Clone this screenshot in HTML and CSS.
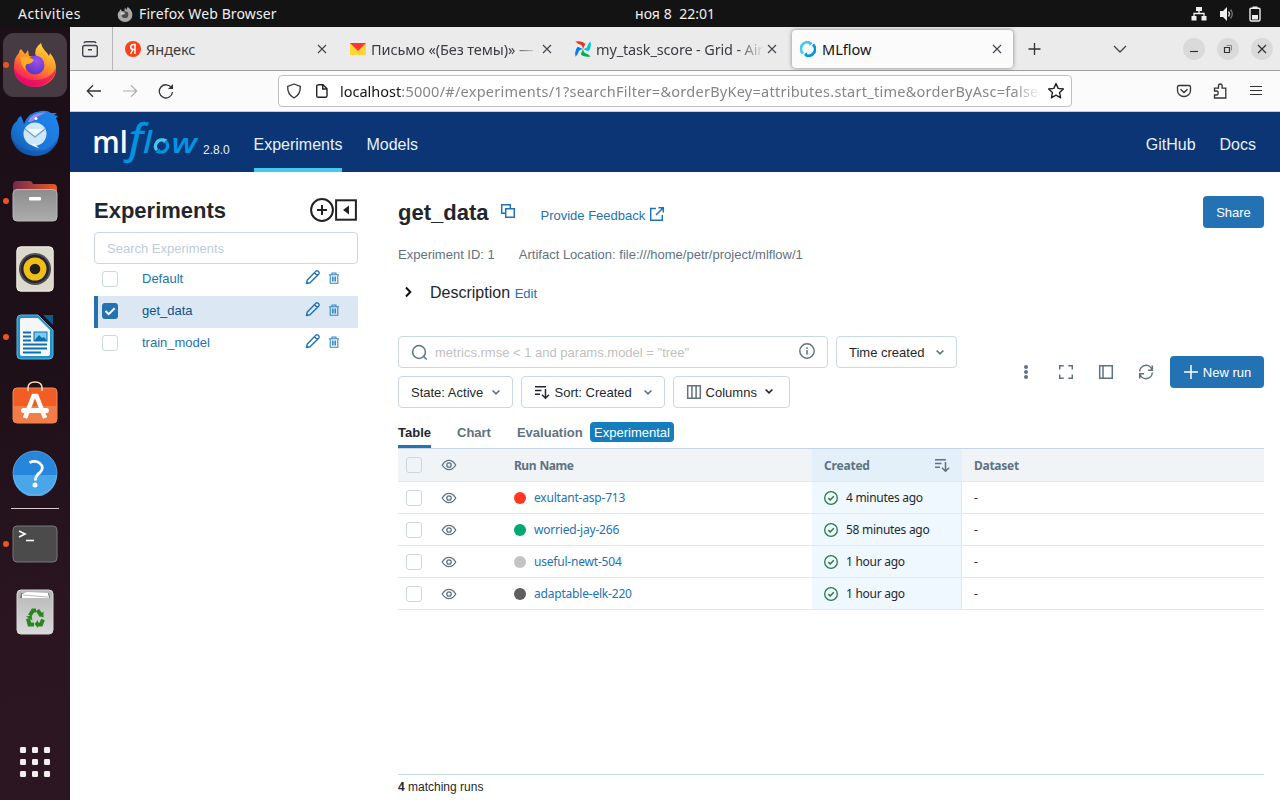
FILE: index.html
```html
<!DOCTYPE html>
<html lang="en">
<head>
<meta charset="utf-8">
<title>MLflow</title>
<link rel="stylesheet" href="styles.css">
</head>
<body>
<svg class="defs" width="0" height="0">
  <defs>
    <linearGradient id="ffBody" x1="0.8" y1="0" x2="0.3" y2="1"><stop offset="0" stop-color="#ffe23c"/><stop offset=".45" stop-color="#ff9326"/><stop offset=".75" stop-color="#ff4046"/><stop offset="1" stop-color="#e5086d"/></linearGradient>
    <radialGradient id="ffGlobe" cx=".6" cy=".3" r=".8"><stop offset="0" stop-color="#9c50f5"/><stop offset="1" stop-color="#5234b8"/></radialGradient>
    <linearGradient id="tb" x1="1" y1="0" x2="0" y2="1"><stop offset="0" stop-color="#2186ee"/><stop offset=".6" stop-color="#1a76d8"/><stop offset="1" stop-color="#1253a6"/></linearGradient>
    <linearGradient id="folder" x1="0" x2="1"><stop offset="0" stop-color="#76294f"/><stop offset="1" stop-color="#ea5b24"/></linearGradient>
    <linearGradient id="grey" x1="0" y1="0" x2="0" y2="1"><stop offset="0" stop-color="#8d8d8d"/><stop offset="1" stop-color="#acacac"/></linearGradient>
    <linearGradient id="bin" x1="0" y1="0" x2="0" y2="1"><stop offset="0" stop-color="#b7b7b7"/><stop offset="1" stop-color="#dadada"/></linearGradient>
    <linearGradient id="ring" x1="0" y1="0" x2="1" y2="1"><stop offset=".45" stop-color="#43c9ed"/><stop offset=".55" stop-color="#0194e2"/></linearGradient>
    <symbol id="close" viewBox="0 0 16 16"><path d="M4 4l8 8M12 4l-8 8" fill="none" stroke="#42414d" stroke-width="1.1"/></symbol>
    <symbol id="pencil" viewBox="0 0 16 16"><path d="M1.500 14.500l.8-3.500 8.800-8.900q.9-.8 1.800 0l1 1q.8.900 0 1.800l-8.900 8.800zM9.500 3.700l2.800 2.800" fill="none" stroke="#2272b4" stroke-width="1.400" stroke-linejoin="round"/></symbol>
    <symbol id="trash" viewBox="0 0 12 12"><path d="M1 2.700h10M4 2.500V1h4v1.500M2.200 2.700v8.500h7.600V2.700M4.500 4.500v5M6 4.500v5M7.500 4.500v5" fill="none" stroke="#3388c6" stroke-width="1.100"/></symbol>
    <symbol id="chev" viewBox="0 0 10 10"><path d="M1.600 3.500L5 6.800l3.400-3.300" fill="none" stroke="currentColor" stroke-width="1.700"/></symbol>
    <symbol id="sort" viewBox="0 0 16 16"><path d="M1 2.700h11M1 6.400h6.500M1 10.200h5M11.500 5v9.300M8 10.800l3.500 3.500 3.500-3.500" fill="none" stroke="currentColor" stroke-width="1.500"/></symbol>
    <symbol id="eye" viewBox="0 0 16 14"><path d="M1.300 7Q4 2.300 8 2.300T14.700 7Q12 11.700 8 11.700T1.300 7z" fill="none" stroke="#5f7281" stroke-width="1.300"/><circle cx="8" cy="7" r="2.200" fill="none" stroke="#5f7281" stroke-width="1.300"/></symbol>
    <symbol id="ok" viewBox="0 0 14 14"><circle cx="7" cy="7" r="6.300" fill="none" stroke="#277c43" stroke-width="1.300"/><path d="M4.300 7.100l1.900 1.900 3.600-3.700" fill="none" stroke="#277c43" stroke-width="1.500"/></symbol>
    <path id="blade" d="M.3.600Q7-1 10.300 2.800L8 8Q7.500 3.500 3.500 3z"/>
  </defs>
</svg>

<div class="desktop">
  <header class="topbar">
    <span class="activities">Activities</span>
    <span class="app"><svg width="16" height="16" viewBox="0 0 48 48"><path d="M24 4l4 8 4-10q16 13 14 26a22 20 0 01-44 0q0-9 6-14l3-5 4 7 7-1z" fill="#a8a8a8"/><circle cx="24" cy="26" r="10" fill="#4c4c4c"/><path d="M10 17l15 3-3 5-10 2z" fill="#ccc"/></svg><span class="app-name">Firefox Web Browser</span></span>
    <span class="clock">ноя 8&nbsp; 22:01</span>
    <span class="tray">
      <svg width="16" height="16" viewBox="0 0 16 16"><path d="M5 1h6v4H5zM.500 10h5v4.500h-5zM10.500 10h5v4.500h-5z" fill="#eee"/><path d="M8 4v3.500M3 11V7.500h10V11" fill="none" stroke="#eee" stroke-width="1.300"/></svg>
      <svg width="16" height="16" viewBox="0 0 16 16"><path d="M1 5h3l4-4v14l-4-4H1z" fill="#eee"/><path d="M9.500 5.500q2 2.500 0 5" fill="none" stroke="#ddd" stroke-width="1.300"/><path d="M11.500 3.500q3.600 4.500 0 9" fill="none" stroke="#777" stroke-width="1.300"/></svg>
      <svg width="16" height="16" viewBox="0 0 16 16"><path d="M4 2.200h8q1 0 1 1v10.300q0 1.500-1.500 1.500h-7Q3 15 3 13.500V3.200q0-1 1-1z" fill="none" stroke="#eee" stroke-width="1.400"/><path d="M5.500.500h5v1.500h-5zM5 9h6v4.500H5z" fill="#eee"/></svg>
    </span>
  </header>

  <div class="below">
    <nav class="dock">
      <div class="dock-item active running"><svg width="44" height="46" viewBox="0 0 44 46"><path d="M1 25Q1 15 6 11q0-3 2-4l4 5q2-2 3-4l1 6h7Q20 7 28 1q1 5 6 10l2 3 1-3q6 7 6 16a21 18 0 01-42 0z" fill="url(#ffBody)"/><path d="M1 26a21 18 0 0042 0q-6 12-21 12T1 26z" fill="#e3056b" opacity=".65"/><circle cx="22" cy="23" r="9.500" fill="url(#ffGlobe)"/><path d="M7 15q8-2 14 3-2 4-7 4-3 2-1 7-5-5-6-14z" fill="#ffab25"/></svg></div>
      <div class="dock-item mail"><svg width="48" height="48" viewBox="0 0 48 48"><path d="M0 24Q0 15 6 11q1-4 4-5 2 4 3 8Q17 2 30 1q6-1 10 2l6 0-3 2 4 1-2 2q4 8 3 16a24 23 0 01-46 8Q0 29 0 24z" fill="url(#tb)"/><path d="M17 12Q20 2 35 2.500L26 7q-3 5-9 5z" fill="#9d8bed"/><circle cx="24" cy="24" r="11.500" fill="#cfe7fb"/><path d="M14 19l10 8 10-8" fill="#edf8ff" stroke="#6f9bc9" stroke-width="1.200"/><path d="M19 34q4 3 9 4l-4-4z" fill="#edf8ff"/><circle cx="25" cy="8.500" r="1.500" fill="#fff"/><path d="M1 29q3 16 23 17 19 0 23-18-7 13-22 13T1 29z" fill="#0d4d9b" opacity=".5"/></svg></div>
      <div class="dock-item running"><svg width="46" height="42" viewBox="0 0 46 42"><path d="M1 30V5q0-4 4-4h13q2 0 3 3h20q4 0 4 4v22z" fill="url(#folder)"/><rect x="1" y="9.500" width="44" height="31.500" rx="4" fill="url(#grey)" stroke="#b8b8b8"/><rect x="17" y="17" width="12" height="3.500" rx="1" fill="#fff"/></svg></div>
      <div class="dock-item"><svg width="38" height="46" viewBox="0 0 38 46"><rect x=".8" y=".8" width="36.400" height="44.400" rx="4" fill="#ded9ce" stroke="#f3efe6"/><circle cx="19" cy="23" r="16" fill="#4d4d4f"/><circle cx="19" cy="23" r="14" fill="#252535"/><circle cx="19" cy="23" r="11.500" fill="#efbf17"/><circle cx="19" cy="23" r="5.300" fill="#202020"/></svg></div>
      <div class="dock-item running"><svg width="38" height="46" viewBox="0 0 38 46"><path d="M5 1h17l15 15v25q0 4-4 4H5q-4 0-4-4V5q0-4 4-4z" fill="#2192cc" stroke="#69b4db"/><path d="M5 4h17l12 12v24q0 2-2 2H6q-2 0-2-2V6q0-2 1-2z" fill="#f4f6f7"/><path d="M27 1h10v10z" fill="#0b5c8e"/><path d="M7 18.500h8M7 22.500h8M7 26.500h8M7 30.500h24M7 34.500h24M7 38.500h18" stroke="#0e70ac" stroke-width="2"/><rect x="18" y="18" width="13" height="9" fill="#79cdf5" stroke="#0e70ac"/><path d="M18 27l5-6 3 3 2-1 3 4z" fill="#0e70ac"/></svg></div>
      <div class="dock-item store"><svg width="46" height="46" viewBox="0 0 46 46"><rect x="1" y="9" width="44" height="35" rx="4" fill="#f15d25" stroke="#ef8b5c"/><path d="M1 27h44v13q0 4-4 4H5q-4 0-4-4z" fill="#f27d48"/><path d="M16 12V9q0-6 7-6t7 6v3" fill="none" stroke="#f7dfb5" stroke-width="1.500"/><path d="M13 39l8.500-22h3L33 39" fill="none" stroke="#fff" stroke-width="4.500"/><rect x="9" y="29" width="28" height="5" rx="2.500" fill="#fff"/></svg></div>
      <div class="dock-item"><svg width="46" height="46" viewBox="0 0 46 46"><circle cx="23" cy="23" r="22" fill="#2586db"/><path d="M1 25a22 22 0 0044 0z" fill="#49a6e8"/><circle cx="23" cy="23" r="22" fill="none" stroke="#75bcea" stroke-width=".7"/><path d="M17.500 12.500q6-2.500 10 .500 5.500 4.500.5 9.500-4.500 3-4.500 8" fill="none" stroke="#fff" stroke-width="2.800"/><circle cx="23" cy="35" r="2.500" fill="#fff"/></svg></div>
      <div class="dock-sep"></div>
      <div class="dock-item running"><svg width="46" height="38" viewBox="0 0 46 38"><rect x="1" y="1" width="44" height="36" rx="4" fill="#4b4b4b" stroke="#777"/><path d="M7 6l6 3-6 3M14 15.500h8" fill="none" stroke="#fff" stroke-width="1.700"/></svg></div>
      <div class="dock-item"><svg width="38" height="46" viewBox="0 0 38 46"><rect x="1" y="1" width="36" height="44" rx="4" fill="url(#bin)" stroke="#d7d7d7"/><path d="M4 9l1-5h28l1 5z" fill="#777"/><path d="M6 9V5l5-2 21 1 1 5z" fill="#fff"/><path d="M7 6l25 2" stroke="#bbb"/><g fill="none" stroke="#26871c" stroke-width="4"><path d="M13.800 26.500l3.200-5h3M21.500 21l4 6M12 29.500l1.500 6h4.500M21 35.500h4l2-5"/></g><path d="M27.500 22.500v6l-5-2z M22 31v8l-3.500-4z M10 27.500l5.500-1 1 5z" fill="#26871c"/></svg></div>
      <svg class="app-grid" width="30" height="30" viewBox="0 0 30 30" fill="#f1f0ef"><rect width="6" height="6" rx="1.300"/><rect x="12" width="6" height="6" rx="1.300"/><rect x="24" width="6" height="6" rx="1.300"/><rect y="12" width="6" height="6" rx="1.300"/><rect x="12" y="12" width="6" height="6" rx="1.300"/><rect x="24" y="12" width="6" height="6" rx="1.300"/><rect y="24" width="6" height="6" rx="1.300"/><rect x="12" y="24" width="6" height="6" rx="1.300"/><rect x="24" y="24" width="6" height="6" rx="1.300"/></svg>
    </nav>

    <div class="browser">
      <div class="tabbar">
        <div class="view"><svg width="18" height="18" viewBox="0 0 18 18" fill="none" stroke="#42414d" stroke-width="1.400"><rect x="1.700" y="5.500" width="14.600" height="11" rx="2"/><path d="M3 3.200q.3-1.500 2-1.500h8q1.700 0 2 1.500M7 9.700h4"/></svg></div>
        <div class="tab"><svg width="16" height="16" viewBox="0 0 16 16"><circle cx="8" cy="8" r="8" fill="#fc3f1d"/><path d="M10 13V3.500H8.500Q5.700 3.500 5.700 6t2.800 2.500H10M8 8.500L5.500 13" fill="none" stroke="#fff" stroke-width="1.500"/></svg><span class="tab-label t1">Яндекс</span><svg class="x" width="16" height="16"><use href="#close"/></svg></div>
        <div class="tab"><svg width="16" height="16" viewBox="0 0 16 16"><path d="M0 2h16v12H0z" fill="#ffd633"/><path d="M0 2h16L8 10z" fill="#f33"/></svg><span class="tab-label t2 fade">Письмо «(Без темы)» —</span><svg class="x" width="16" height="16"><use href="#close"/></svg></div>
        <div class="tab"><svg width="16" height="16" viewBox="0 0 16 16"><use href="#blade" fill="#e43921"/><use href="#blade" fill="#00c7d4" transform="rotate(90 8 8)"/><use href="#blade" fill="#04b04c" transform="rotate(180 8 8)"/><use href="#blade" fill="#017cee" transform="rotate(270 8 8)"/></svg><span class="tab-label t3 fade">my_task_score - Grid - Air</span><svg class="x" width="16" height="16"><use href="#close"/></svg></div>
        <div class="tab selected"><svg width="16" height="16" viewBox="0 0 16 16"><path d="M3 12.500A6.500 6.500 0 0110 1.800" fill="none" stroke="#43c9ed" stroke-width="2.800"/><path d="M13 3.500A6.500 6.500 0 016 14.200" fill="none" stroke="#0194e2" stroke-width="2.800"/><path d="M8.500 0l4 2-3 3zM7.500 16l-4-2 3-3z" fill="url(#ring)"/></svg><span class="tab-label t4">MLflow</span><svg class="x" width="16" height="16"><use href="#close"/></svg></div>
        <svg class="plus" width="16" height="16" viewBox="0 0 16 16"><path d="M8.500 2v12M2.500 8h12" stroke="#333" stroke-width="1.300"/></svg>
        <svg class="alltabs" width="16" height="16" viewBox="0 0 16 16"><path d="M2 5l6 6 6-6" fill="none" stroke="#444" stroke-width="1.300"/></svg>
        <div class="winbtns">
          <span><svg width="10" height="10" viewBox="0 0 10 10"><path d="M1 7.500h8" stroke="#333" stroke-width="1.200"/></svg></span>
          <span><svg width="10" height="10" viewBox="0 0 10 10" fill="none" stroke="#333"><path d="M1.500 3.500h5v5h-5z" stroke-width="1.200"/><path d="M3.500 1.500h5v5" stroke="#888"/></svg></span>
          <span><svg width="10" height="10" viewBox="0 0 10 10"><path d="M1 1l8 8M9 1L1 9" stroke="#333" stroke-width="1.300"/></svg></span>
        </div>
      </div>

      <div class="toolbar">
        <div class="nav-btns">
          <svg width="16" height="16" viewBox="0 0 16 16" fill="none" stroke="#333" stroke-width="1.300"><path d="M15 8H1.500M7 2.300L1.300 8 7 13.700"/></svg>
          <svg width="16" height="16" viewBox="0 0 16 16" fill="none" stroke="#aaa" stroke-width="1.200"><path d="M1 8h13.500M9 2.300L14.700 8 9 13.700"/></svg>
          <svg width="16" height="16" viewBox="0 0 16 16"><path d="M13.600 5A6.600 6.600 0 1014.500 9" fill="none" stroke="#333" stroke-width="1.300"/><path d="M15 1v5H10z" fill="#333"/></svg>
        </div>
        <div class="urlbar">
          <svg width="16" height="16" viewBox="0 0 16 16"><path d="M8 1l6.300 2.300q.500 8-6.300 11.700Q1.200 11.300 1.700 3.300z" fill="none" stroke="#333" stroke-width="1.300" stroke-linejoin="round"/></svg>
          <svg class="page-ic" width="16" height="16" viewBox="0 0 16 16"><path d="M4 1.700h5l4 4v7q0 1.600-1.600 1.600H4.300q-1.600 0-1.600-1.600V3.300q0-1.600 1.600-1.600zM8.700 1.700V6H13" fill="none" stroke="#222" stroke-width="1.400"/></svg>
          <span class="url"><b>localhost</b>:5000/#/experiments/1?searchFilter=&amp;orderByKey=attributes.start_time&amp;orderByAsc=false</span>
          <svg width="18" height="18" viewBox="0 0 18 18"><path d="M9 1.600l2.200 4.800 5.200.600-3.800 3.600 1 5.200L9 13.200l-4.600 2.600 1-5.200L1.600 7l5.200-.600z" fill="none" stroke="#222" stroke-width="1.400" stroke-linejoin="round"/></svg>
        </div>
        <div class="tools">
          <svg width="16" height="16" viewBox="0 0 16 16" fill="none" stroke="#333" stroke-width="1.300"><path d="M3 2.500h10q1.500 0 1.500 1.500v3.500a6.500 6 0 01-13 0V4Q1.500 2.500 3 2.500zM4.500 6.200L8 9.500l3.500-3.300"/></svg>
          <svg width="16" height="16" viewBox="0 0 16 16" fill="none" stroke="#333" stroke-width="1.300"><path d="M2.500 8V5.200h4V3q0-2 1.800-2t1.800 2v2.200h3.700V15H2.500v-3h2q1.700 0 1.700-2t-1.700-2z"/></svg>
          <svg width="16" height="16" viewBox="0 0 16 16" stroke="#333" stroke-width="1.200"><path d="M2 3.500h12M2 7.500h12M2 11.500h12"/></svg>
        </div>
      </div>

      <div class="mlheader">
        <svg class="logo" width="106" height="44" viewBox="0 0 106 44">
          <text x="-1.800" y="31" class="lg-ml" textLength="35.500" lengthAdjust="spacingAndGlyphs">ml</text>
          <text x="35" y="31" class="lg-f" textLength="14" lengthAdjust="spacingAndGlyphs">f</text>
          <text x="49" y="31" class="lg-fl" textLength="9" lengthAdjust="spacingAndGlyphs">l</text>
          <g fill="none" stroke-width="3.200"><path d="M63 28.300a6.200 6.200 0 016.500-10" stroke="#43c9ed"/><path d="M72 19.700a6.200 6.200 0 01-6.500 10" stroke="#0194e2"/></g>
          <path d="M68.500 16l5 1.500-4 4z" fill="#43c9ed"/><path d="M66.500 32l-5-1.500 4-4z" fill="#0194e2"/>
          <text x="77.500" y="31" class="lg-w" textLength="25.500" lengthAdjust="spacingAndGlyphs">w</text>
        </svg>
        <span class="version">2.8.0</span>
        <a class="navlink on">Experiments</a>
        <a class="navlink">Models</a>
        <span class="grow"></span>
        <a class="navlink">GitHub</a>
        <a class="navlink">Docs</a>
      </div>

      <div class="page">
        <aside class="side">
          <div class="side-head"><h1>Experiments</h1>
            <svg width="48" height="24" viewBox="0 0 48 24" fill="none" stroke="#222"><circle cx="12" cy="12" r="10.900" stroke-width="2"/><path d="M12 7v10M7 12h10" stroke-width="2"/><rect x="26.100" y="2.300" width="19.800" height="19.400" stroke-width="2"/><path d="M39 7.500v9L33 12z" fill="#222" stroke="none"/></svg>
          </div>
          <div class="side-search">Search Experiments</div>
          <div class="exp"><i class="cb"></i><span>Default</span><svg width="16" height="16"><use href="#pencil"/></svg><svg width="12" height="12"><use href="#trash"/></svg></div>
          <div class="exp sel"><i class="cb checked"><svg width="16" height="16" viewBox="0 0 16 16"><path d="M3.500 8l3.200 3.200 6-6" fill="none" stroke="#fff" stroke-width="2"/></svg></i><span>get_data</span><svg width="16" height="16"><use href="#pencil"/></svg><svg width="12" height="12"><use href="#trash"/></svg></div>
          <div class="exp"><i class="cb"></i><span>train_model</span><svg width="16" height="16"><use href="#pencil"/></svg><svg width="12" height="12"><use href="#trash"/></svg></div>
        </aside>

        <main class="main">
          <div class="title-row"><h2>get_data</h2>
            <svg class="copy" width="16" height="16" viewBox="0 0 16 16" fill="none" stroke="#2272b4" stroke-width="1.500"><path d="M5 10.300H1.700V1.700h8.600V5M5.700 5.700h8.600v8.600H5.700z"/></svg>
            <a class="feedback">Provide Feedback</a>
            <svg class="ext" width="16" height="16" viewBox="0 0 16 16" fill="none" stroke="#2272b4" stroke-width="1.500"><path d="M7 2.500H1.700v11.800h11.600V9M9.500 1.700h4.800v4.800M14.300 1.700L7 9"/></svg>
            <span class="grow"></span><button class="primary share">Share</button>
          </div>
          <div class="meta"><span>Experiment ID: 1</span><span>Artifact Location: file:///home/petr/project/mlflow/1</span></div>
          <div class="desc"><svg width="12" height="12" viewBox="0 0 12 12"><path d="M4 1.500L8.300 6 4 10.500" fill="none" stroke="#111" stroke-width="2"/></svg><span>Description</span><a>Edit</a></div>

          <div class="controls">
            <div class="filters">
              <div class="frow">
                <div class="search"><svg width="17" height="17" viewBox="0 0 17 17" fill="none" stroke="#5f7281" stroke-width="1.500"><circle cx="8" cy="8" r="6.400"/><path d="M12.300 12.300l3.400 3.200"/></svg><span>metrics.rmse &lt; 1 and params.model = "tree"</span><svg class="info" width="16" height="16" viewBox="0 0 16 16"><circle cx="8" cy="8" r="7.200" fill="none" stroke="#5f7281" stroke-width="1.400"/><path d="M8 7v4.500M8 4.300v1.700" stroke="#5f7281" stroke-width="1.500"/></svg></div>
                <button class="btn time">Time created<svg width="10" height="10"><use href="#chev"/></svg></button>
              </div>
              <div class="frow">
                <button class="btn state">State: Active<svg width="10" height="10"><use href="#chev"/></svg></button>
                <button class="btn sortb"><svg class="lead" width="16" height="16"><use href="#sort"/></svg>Sort: Created<svg width="10" height="10"><use href="#chev"/></svg></button>
                <button class="btn cols"><svg class="lead g" width="16" height="16" viewBox="0 0 16 16"><path d="M1.700 1.700h12.600v12.600H1.700zM5.900 1.700v12.600M10.100 1.700v12.600" fill="none" stroke="currentColor" stroke-width="1.500"/></svg>Columns<svg class="dark" width="10" height="10"><use href="#chev"/></svg></button>
              </div>
            </div>
            <div class="actions">
              <svg width="16" height="16" viewBox="0 0 16 16" fill="#5f7281"><circle cx="8" cy="3" r="2"/><circle cx="8" cy="8" r="2"/><circle cx="8" cy="13" r="2"/></svg>
              <svg width="16" height="16" viewBox="0 0 16 16" fill="none" stroke="#5f7281" stroke-width="1.500"><path d="M1.700 5.500V1.700h4M10.300 1.700h4v3.800M14.300 10.500v3.800h-4M5.700 14.300h-4v-3.800"/></svg>
              <svg width="16" height="16" viewBox="0 0 16 16" fill="none" stroke="#5f7281" stroke-width="1.500"><path d="M1.700 1.700h12.600v12.600H1.700zM5 1.700v12.600"/></svg>
              <svg width="16" height="16" viewBox="0 0 16 16" fill="none" stroke="#5f7281" stroke-width="1.500"><path d="M1.700 7.500A6.300 6.300 0 0114 5.700M14.300 1.500v4.700H10M14.300 8.500A6.300 6.300 0 012 10.300M1.700 14.500V9.800H6"/></svg>
              <button class="primary newrun"><svg width="16" height="16" viewBox="0 0 16 16"><path d="M8 1v14M1 8h14" stroke="#fff" stroke-width="1.500"/></svg>New run</button>
            </div>
          </div>

          <div class="tabs"><span class="cur">Table</span><span>Chart</span><span>Evaluation</span><em>Experimental</em></div>

          <div class="grid">
            <div class="row head"><i class="cb"></i><svg width="16" height="14"><use href="#eye"/></svg><span class="name">Run Name</span><span class="created">Created<svg class="sorticon" width="16" height="16"><use href="#sort"/></svg></span><span class="ds">Dataset</span></div>
            <div class="row"><i class="cb"></i><svg width="16" height="14"><use href="#eye"/></svg><span class="name"><i class="dot red"></i><a>exultant-asp-713</a></span><span class="created"><svg width="14" height="14"><use href="#ok"/></svg>4 minutes ago</span><span class="ds">-</span></div>
            <div class="row"><i class="cb"></i><svg width="16" height="14"><use href="#eye"/></svg><span class="name"><i class="dot green"></i><a>worried-jay-266</a></span><span class="created"><svg width="14" height="14"><use href="#ok"/></svg>58 minutes ago</span><span class="ds">-</span></div>
            <div class="row"><i class="cb"></i><svg width="16" height="14"><use href="#eye"/></svg><span class="name"><i class="dot light"></i><a>useful-newt-504</a></span><span class="created"><svg width="14" height="14"><use href="#ok"/></svg>1 hour ago</span><span class="ds">-</span></div>
            <div class="row"><i class="cb"></i><svg width="16" height="14"><use href="#eye"/></svg><span class="name"><i class="dot deep"></i><a>adaptable-elk-220</a></span><span class="created"><svg width="14" height="14"><use href="#ok"/></svg>1 hour ago</span><span class="ds">-</span></div>
          </div>
          <div class="foot"><b>4</b> matching runs</div>
        </main>
      </div>
    </div>
  </div>
</div>
</body>
</html>
```
FILE: styles.css
```css
* { box-sizing: border-box; }
body { margin: 0; font-family: "Liberation Sans", Arial, sans-serif; font-size: 13px; color: #1f272d; overflow: hidden; }
svg { display: block; flex: none; }
button { font: inherit; margin: 0; }
.defs { position: absolute; }
.grow { flex: 1; }
.desktop { width: 1280px; height: 800px; display: flex; flex-direction: column; background: #fff; }

.topbar { height: 27px; background: #131313; color: #f0f0f0; display: flex; align-items: center; font: 14px/27px "Noto Sans", sans-serif; }
.activities { width: 117px; padding-left: 18px; letter-spacing: .45px; }
.app { display: flex; align-items: center; gap: 6px; width: 518px; }
.app-name { letter-spacing: .12px; }
.clock { white-space: nowrap; flex: 1; letter-spacing: .05px; }
.tray { display: flex; gap: 12px; padding-right: 17px; }

.below { flex: 1; display: flex; min-height: 0; }
.dock { width: 70px; background: linear-gradient(165deg, #1c0f17 0%, #1e1018 45%, #2a1520 75%, #2c1622 100%); display: flex; flex-direction: column; align-items: center; padding: 4px 0 23px; }
.dock-item { width: 64px; height: 64px; margin: 2px 0; border-radius: 11px; display: flex; align-items: center; justify-content: center; position: relative; flex: none; }
.dock-item.active { background: #463b42; }
.dock-item.running::before { content: ""; position: absolute; left: 0; top: 29px; width: 6px; height: 6px; border-radius: 50%; background: #e95420; }
.dock-item.mail { padding-top: 2px; }
.dock-item.store { padding-bottom: 6px; }
.dock-sep { width: 48px; height: 1px; margin: 1px 0; background: #d2cbc9; flex: none; }
.app-grid { margin-top: auto; }

.browser { flex: 1; display: flex; flex-direction: column; min-width: 0; }
.tabbar { height: 44px; background: #ebebeb; border-bottom: 1px solid #9e9e9e; display: flex; align-items: center; font: 14.500px "Noto Sans", sans-serif; color: #3c3c43; }
.view { width: 43px; height: 43px; border-right: 1px solid #b5b5b5; display: flex; align-items: center; padding-left: 11px; }
.tab { width: 225px; height: 38px; padding: 0 8px 0 12px; display: flex; align-items: center; gap: 6px; }
.tab-label { flex: 1; white-space: nowrap; overflow: hidden; line-height: 24px; margin-left: -1px; }
.t2 { letter-spacing: -.1px; }
.t3 { letter-spacing: -.15px; }
.t4 { margin-left: 0; }
.tab .x { margin-left: -6px; }
.fade { -webkit-mask-image: linear-gradient(90deg, #000 84%, transparent 100%); mask-image: linear-gradient(90deg, #000 84%, transparent 100%); }
.selected { width: 221px; padding: 0 8px; margin-left: 4px; background: #fbfbfb; border-radius: 4px; box-shadow: 0 0 4px rgba(0,0,0,.45); color: #15141a; }
.plus { margin-left: 13px; }
.alltabs { margin-left: 70px; }
.winbtns { display: flex; gap: 12px; margin-left: 55px; }
.winbtns span { width: 22px; height: 22px; border-radius: 50%; background: #dadada; display: flex; align-items: center; justify-content: center; }

.toolbar { height: 41px; background: #fbfbfb; border-bottom: 1px solid #ccc; display: flex; align-items: center; }
.nav-btns { display: flex; gap: 20px; padding-left: 16px; width: 208px; }
.urlbar { width: 794px; height: 32px; border: 1px solid #bfbfc5; border-radius: 4px; background: #fff; display: flex; align-items: center; padding: 0 6px 0 7px; }
.page-ic { margin: 0 10px 0 12px; }
.url { flex: 1; white-space: nowrap; overflow: hidden; margin-right: 6px; font: 14.500px/24px "Noto Sans", sans-serif; letter-spacing: .26px; color: #858585; -webkit-mask-image: linear-gradient(90deg, #000 96%, transparent); mask-image: linear-gradient(90deg, #000 96%, transparent); }
.url b { font-weight: 400; color: #15141a; letter-spacing: 0; }
.tools { display: flex; gap: 20px; margin-left: 104px; }

.mlheader { height: 60px; background: #0b3574; display: flex; align-items: stretch; padding: 0 24px; color: #e7f1fb; flex: none; }
.logo { margin-top: 10px; overflow: visible; }
.lg-ml { font: 600 31px "Open Sans", sans-serif; fill: #fff; }
.lg-f, .lg-fl, .lg-w { font: italic 600 31px "Open Sans", sans-serif; fill: #0194e2; }
.lg-f { font: italic 400 40px "Noto Sans", sans-serif; stroke: #0194e2; stroke-width: .5px; }
.lg-w { font-size: 27px; }
.version { font-size: 12px; width: 27px; margin: 31px 23.500px 0 3px; }
.navlink { font-size: 16px; line-height: 58px; padding-top: 4px; }
.navlink + .navlink { margin-left: 24px; }
.navlink.on { border-bottom: 4px solid #43c9ed; }

.page { flex: 1; display: flex; min-height: 0; }
.side { width: 288px; padding: 24px 0 0 24px; }
.side-head { display: flex; height: 36px; justify-content: space-between; }
h1, h2 { margin: 0; font-size: 22px; line-height: 30px; }
.side-head svg { margin-top: 2px; }
.side-search { height: 32px; border: 1px solid #c9d6e4; border-radius: 4px; padding-left: 12px; line-height: 31px; color: #bdcddb; }
.exp { height: 32px; display: flex; align-items: center; padding-left: 8px; color: #2272b4; }
.exp span { width: 163px; margin-left: 24px; padding-bottom: 4px; }
.exp > svg:nth-of-type(1) { margin-bottom: 6px; }
.exp > svg:last-child { margin: 0 0 4px 7px; }
.exp.sel { background: #dbe7f3; color: #0e538b; border-left: 4px solid #2272b4; padding-left: 4px; }
.cb { width: 16px; height: 16px; border: 1px solid #c9d6e4; border-radius: 3px; background: #fff; flex: none; display: block; }
.exp .cb { margin-top: -2px; }
.exp .checked { border: 0; background: #2272b4; }

.main { flex: 1; margin-left: 40px; padding: 24px 16px 0 0; display: flex; flex-direction: column; }
.title-row { display: flex; align-items: flex-start; height: 48px; }
h2 { line-height: 34px; }
.copy { margin: 7px 0 0 12px; }
.feedback { margin: 12px 4px 0 24px; line-height: 16px; color: #2272b4; }
.ext { margin-top: 10px; }
.primary { border: 0; border-radius: 4px; background: #2272b4; color: #fff; height: 32px; display: flex; align-items: center; justify-content: center; padding: 0; }
.share { width: 61px; }
.meta { display: flex; gap: 24px; color: #5f7281; line-height: 22px; height: 36px; }
.desc { display: flex; align-items: center; height: 24px; }
.desc svg { margin-left: 4px; }
.desc span { font-size: 16px; margin: 0 4.600px 0 16px; padding-top: 2px; }
.desc a { color: #2272b4; padding-top: 3px; }
.controls { display: flex; margin-top: 32px; justify-content: space-between; align-items: center; }
.frow { display: flex; gap: 8px; margin-bottom: 8px; }
.frow:last-child { margin-bottom: 0; }
.search { width: 430px; height: 32px; border: 1px solid #c9d6e4; border-radius: 4px; display: flex; align-items: center; padding: 0 12px; color: #bfbfbf; }
.search span { flex: 1; margin-left: 7px; }
.search .info { margin-bottom: 3px; }
.btn { height: 32px; border: 1px solid #c9d6e4; border-radius: 4px; background: #fff; display: flex; align-items: center; padding: 0 11px 0 12px; color: #1f272d; white-space: nowrap; }
.btn > svg:last-child { margin-left: auto; color: #5f7281; }
.btn > svg.dark:last-child { color: #1f272d; margin-right: 4px; margin-bottom: 3px; }
.lead { margin-right: 4.500px; }
.lead.g { color: #5f7281; margin-right: 3.600px; }
.time { width: 121px; }
.state { width: 115px; }
.sortb { width: 144px; }
.cols { width: 117px; }
.actions { display: flex; align-items: center; gap: 24px; }
.newrun { width: 94px; gap: 4px; margin-left: -8px; }
.tabs { height: 40px; display: flex; align-items: flex-end; font-weight: 700; color: #5f7281; gap: 26px; }
.tabs span { line-height: 25px; height: 28px; }
.tabs .cur { color: #1f272d; border-bottom: 3px solid #2272b4; }
.tabs em { font: 13px/21px "Liberation Sans", sans-serif; height: 20px; color: #fff; background: #137dbd; border-radius: 4px; padding: 0 4px; margin: 0 0 6px -18.600px; }
.grid { border-top: 1px solid #c5d5e4; font: 12px "Noto Sans", sans-serif; }
.row { height: 32px; display: grid; grid-template-columns: 43px 61px 310px 150px 1fr; align-items: center; border-bottom: 1px solid #e2e8ee; }
.row .cb { margin-left: 8px; }
.row > span { display: flex; align-items: center; padding: 0 12px; height: 100%; letter-spacing: -.28px; }
.name a { color: #2272b4; letter-spacing: -.2px; }
.head { height: 33px; background: #f0f4f7; color: #5f7281; font-weight: 700; }
.row.head > .name { letter-spacing: -.5px; word-spacing: 1px; }
.row.head > .created { letter-spacing: -.2px; }
.head .cb { background: transparent; }
.row .created { background: #f0f8ff; gap: 8px; border-right: 1px solid #dfe8f0; }
.head .created { background: #e3eff9; border-right: 0; }
.sorticon { margin-left: auto; }
.dot { width: 12px; height: 12px; border-radius: 50%; margin-right: 8px; }
.red { background: #ff3621; }
.green { background: #00a972; }
.light { background: #c4c4c4; }
.deep { background: #5f5f5f; }
.foot { margin-top: auto; height: 26px; border-top: 1px solid #c5d9e8; font-size: 12px; line-height: 25px; }
```
